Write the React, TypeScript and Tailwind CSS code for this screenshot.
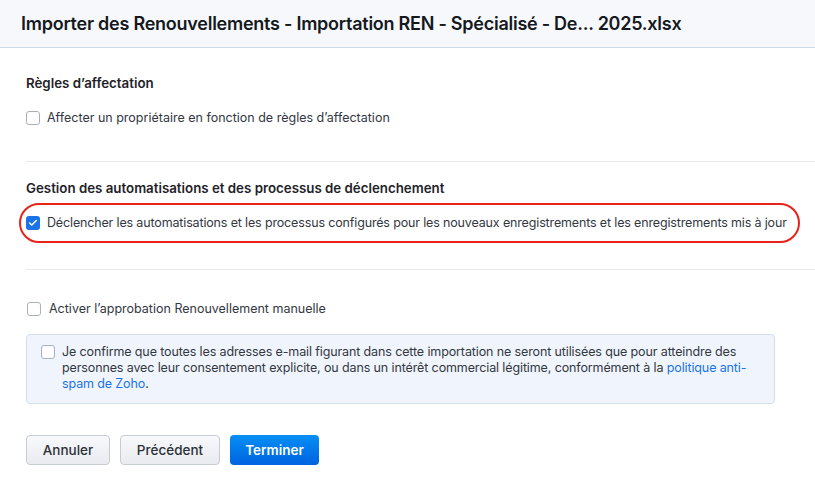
import { Check } from "lucide-react"

function Box({ checked = false }: { checked?: boolean }) {
    return checked ? (
        <span className="flex h-[14px] w-[14px] shrink-0 items-center justify-center rounded-[3px] bg-[#1a73e8]">
            <Check className="h-[10px] w-[10px] text-white" strokeWidth={3.5} />
        </span>
    ) : (
        <span className="block h-[14px] w-[14px] shrink-0 rounded-[3px] border border-[#a9b0ba] bg-white" />
    )
}

export default function App() {
    return (
        <div className="h-[484px] w-[815px] overflow-hidden bg-white font-['Inter',sans-serif] text-[#1f2329]">
            {/* header */}
            <div className="flex h-[48px] items-center border-b border-[#cbdae8] bg-[#f6f8fc] pl-[21px]">
                <h1 className="text-[18px] font-semibold tracking-[-0.25px] text-[#15181d]">
                    Importer des Renouvellements - Importation REN - Spécialisé - De... 2025.xlsx
                </h1>
            </div>

            {/* assignment rules */}
            <div className="pl-[26px]">
                <h2 className="pt-[26px] text-[13.3px] font-semibold leading-[18px]">Règles d’affectation</h2>
                <label className="mt-[17px] flex items-center gap-[7px] text-[12.5px] leading-[18px] text-[#33383f]">
                    <Box />
                    Affecter un propriétaire en fonction de règles d’affectation
                </label>
                <div className="mt-[34px] border-t border-[#e8eaee]" />

                {/* automations */}
                <h2 className="pt-[17px] text-[13.3px] font-semibold leading-[18px]">
                    Gestion des automatisations et des processus de déclenchement
                </h2>
                <label className="ml-[-7px] mt-[6px] flex h-[40px] w-[781px] items-center gap-[7px] whitespace-nowrap rounded-full border-2 border-[#e8231a] pl-[5px] text-[12.5px] tracking-[-0.15px] text-[#33383f]">
                    <Box checked />
                    Déclencher les automatisations et les processus configurés pour les nouveaux enregistrements et les enregistrements mis à jour
                </label>
                <div className="mt-[26px] border-t border-[#e8eaee]" />

                <label className="ml-[1px] mt-[30px] flex items-center gap-[8px] text-[12.5px] leading-[18px] text-[#33383f]">
                    <Box />
                    Activer l’approbation Renouvellement manuelle
                </label>

                {/* consent */}
                <div className="mt-[16px] flex w-[749px] gap-[7px] rounded-[4px] border border-[#d3dfec] bg-[#f0f5fd] pb-[11px] pl-[14px] pr-[16px] pt-[9px]">
                    <div className="mt-[1px] shrink-0">
                        <Box />
                    </div>
                    <p className="text-[12.5px] leading-[16px] tracking-[-0.12px] text-[#33383f]">
                        Je confirme que toutes les adresses e-mail figurant dans cette importation ne seront utilisées que pour atteindre des personnes avec leur consentement explicite, ou dans un intérêt commercial légitime, conformément à la{" "}
                        <a className="text-[#1a73e8]">politique anti-spam de Zoho</a>.
                    </p>
                </div>

                {/* actions */}
                <div className="mt-[31px] flex gap-[10px] text-[13.5px] font-medium">
                    <button className="h-[30px] w-[84px] rounded-[4px] border border-[#c6cbd4] bg-gradient-to-b from-[#f8f9fb] to-[#e8ebf0] text-[#2b3038]">
                        Annuler
                    </button>
                    <button className="h-[30px] w-[100px] rounded-[4px] border border-[#c6cbd4] bg-gradient-to-b from-[#f8f9fb] to-[#e8ebf0] text-[#2b3038]">
                        Précédent
                    </button>
                    <button className="h-[30px] w-[89px] rounded-[4px] bg-gradient-to-b from-[#0a8ff5] to-[#0062e0] font-semibold text-white">
                        Terminer
                    </button>
                </div>
            </div>
        </div>
    )
}
